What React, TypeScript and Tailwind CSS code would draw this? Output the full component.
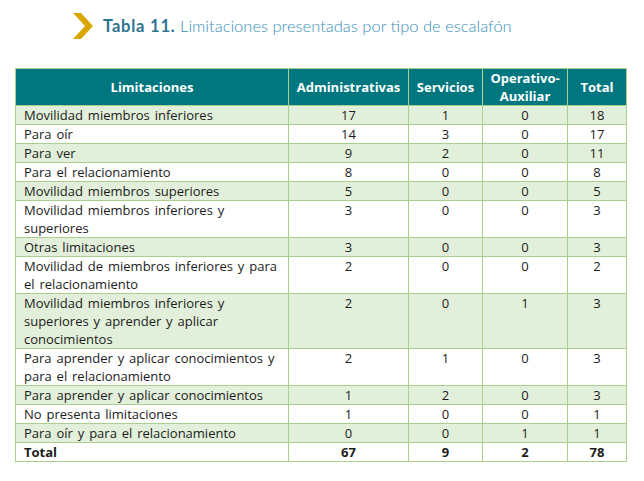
import React from "react"

type Row = { label: React.ReactNode; a: number; s: number; o: number; t: number }

const rows: Row[] = [
  { label: "Movilidad miembros inferiores", a: 17, s: 1, o: 0, t: 18 },
  { label: "Para oír", a: 14, s: 3, o: 0, t: 17 },
  { label: "Para ver", a: 9, s: 2, o: 0, t: 11 },
  { label: "Para el relacionamiento", a: 8, s: 0, o: 0, t: 8 },
  { label: "Movilidad miembros superiores", a: 5, s: 0, o: 0, t: 5 },
  {
    label: (
      <>
        Movilidad miembros inferiores y<br />
        superiores
      </>
    ),
    a: 3,
    s: 0,
    o: 0,
    t: 3,
  },
  { label: "Otras limitaciones", a: 3, s: 0, o: 0, t: 3 },
  {
    label: (
      <>
        Movilidad de miembros inferiores y para<br />
        el relacionamiento
      </>
    ),
    a: 2,
    s: 0,
    o: 0,
    t: 2,
  },
  {
    label: (
      <>
        Movilidad miembros inferiores y<br />
        superiores y aprender y aplicar<br />
        conocimientos
      </>
    ),
    a: 2,
    s: 0,
    o: 1,
    t: 3,
  },
  {
    label: (
      <>
        Para aprender y aplicar conocimientos y<br />
        para el relacionamiento
      </>
    ),
    a: 2,
    s: 1,
    o: 0,
    t: 3,
  },
  { label: "Para aprender y aplicar conocimientos", a: 1, s: 2, o: 0, t: 3 },
  { label: "No presenta limitaciones", a: 1, s: 0, o: 0, t: 1 },
  { label: "Para oír y para el relacionamiento", a: 0, s: 0, o: 1, t: 1 },
]

const cell = "border border-[#a9d08e] leading-[18px] align-top"

export default function App() {
  return (
    <div className="w-[644px] h-[481px] bg-white font-['Open_Sans',sans-serif]">
      <div className="flex items-center gap-[10px] pl-[73px] pt-[12px] h-[40px]">
        <svg width="20" height="26" viewBox="0 0 20 26">
          <polygon points="0,0 8,0 20,13 8,26 0,26 12,13" fill="#d9a800" />
        </svg>
        <p className="font-['Lato',sans-serif] font-light text-[16.5px] text-[#3b8fba]">
          <span className="font-bold text-[#2b7390] tracking-[0.8px]">Tabla 11.</span> Limitaciones presentadas por tipo de escalafón
        </p>
      </div>

      <table className="mt-[28px] ml-[15px] w-[611px] table-fixed border-collapse text-[13px] text-[#1c1c1c]">
        <colgroup>
          <col className="w-[273px]" />
          <col className="w-[120px]" />
          <col className="w-[74px]" />
          <col className="w-[85px]" />
          <col className="w-[59px]" />
        </colgroup>
        <thead>
          <tr className="bg-[#00777f] text-white font-bold text-[13px]">
            <th className="border border-[#a9d08e] leading-[18px] align-middle">Limitaciones</th>
            <th className="border border-[#a9d08e] leading-[18px] align-middle">Administrativas</th>
            <th className="border border-[#a9d08e] leading-[18px] align-middle">Servicios</th>
            <th className="border border-[#a9d08e] leading-[18px] align-middle">
              Operativo-
              <br />
              Auxiliar
            </th>
            <th className="border border-[#a9d08e] leading-[18px] align-middle">Total</th>
          </tr>
        </thead>
        <tbody>
          {rows.map((r, i) => (
            <tr key={i} className={i % 2 === 0 ? "bg-[#e2efda]" : "bg-white"}>
              <td className={`${cell} pl-[8px] [word-spacing:1.5px]`}>{r.label}</td>
              <td className={`${cell} text-center`}>{r.a}</td>
              <td className={`${cell} text-center`}>{r.s}</td>
              <td className={`${cell} text-center`}>{r.o}</td>
              <td className={`${cell} text-center`}>{r.t}</td>
            </tr>
          ))}
          <tr className="bg-white font-bold">
            <td className={`${cell} pl-[8px]`}>Total</td>
            <td className={`${cell} text-center`}>67</td>
            <td className={`${cell} text-center`}>9</td>
            <td className={`${cell} text-center`}>2</td>
            <td className={`${cell} text-center`}>78</td>
          </tr>
        </tbody>
      </table>
    </div>
  )
}
